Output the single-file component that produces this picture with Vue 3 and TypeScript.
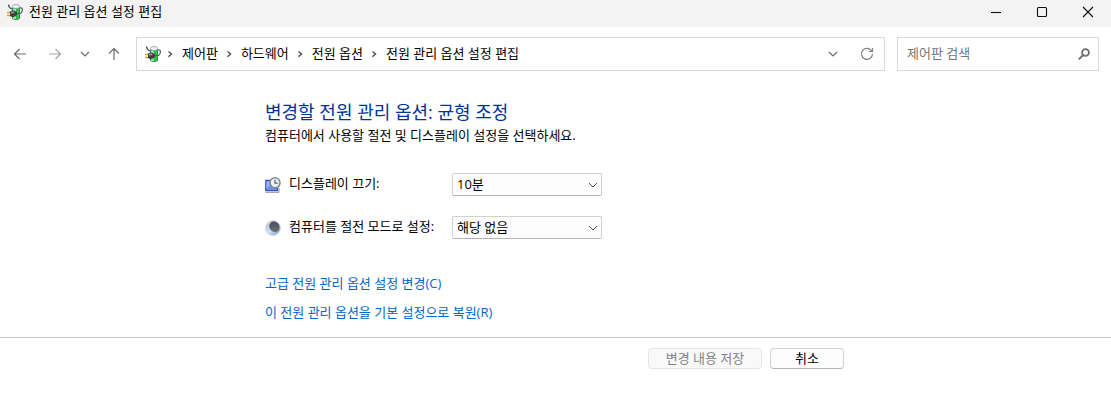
<script setup lang="ts">
import { ref } from 'vue'

const title = '전원 관리 옵션 설정 편집'
const crumbs: string[] = ['제어판', '하드웨어', '전원 옵션', title]
const query = ref('')
const displayOff = ref('10분')
const sleepAfter = ref('해당 없음')
const durations: string[] = ['10분', '30분', '1시간', '해당 없음']
</script>

<template>
  <svg class="defs" width="0" height="0" aria-hidden="true">
    <symbol id="power-plan" viewBox="0 0 16 16">
      <path d="M5 3h8v11.500q-1.500 1.500-4 1.500t-4-1.500z" fill="#1f9f3a" />
      <path d="M6 4.500h3V15H6z" fill="#8fe49a" />
      <path d="M9.500 5H12v10H9.500z" fill="#2fc04c" />
      <ellipse cx="9" cy="2.500" rx="3.700" ry="2" fill="#f4f6fc" stroke="#8d94b8" stroke-width=".8" />
      <path d="M13 4q2.600-.5 2.400 2T13.500 9.500H10" fill="none" stroke="#555c58" stroke-width="1.200" />
      <path d="M1.500 0.500q0 3 3.500 4.500" fill="none" stroke="#50545c" stroke-width="1.300" />
      <path d="M0 8.500h3.500M0 11.500h3.500" stroke="#d9a21c" stroke-width="1.600" />
      <path d="M3 7.500l2.500-1.200L8 7l2 1.500v2.200L8 12.500l-2.500.7L3 12z" fill="#404042" />
      <path d="M4 8l1.500-.7 2 .4L7 9.200l-3 .3z" fill="#949598" />
    </symbol>
  </svg>
  <div class="window">
    <header class="titlebar">
      <svg class="app-icon" viewBox="0 0 16 16" aria-hidden="true"><use href="#power-plan" /></svg>
      <span class="caption">{{ title }}</span>
      <button class="win-btn" type="button" aria-label="최소화">
        <svg viewBox="0 0 12 12"><path d="M1 6.500h10" /></svg>
      </button>
      <button class="win-btn" type="button" aria-label="최대화">
        <svg viewBox="0 0 12 12"><rect x="1.500" y="1.500" width="9" height="9" rx="1" /></svg>
      </button>
      <button class="win-btn" type="button" aria-label="닫기">
        <svg viewBox="0 0 12 12"><path d="M1 1l10 10M11 1L1 11" /></svg>
      </button>
    </header>

    <div class="toolbar">
      <nav class="history" aria-label="탐색">
        <button class="nav-btn" type="button" aria-label="뒤로">
          <svg width="14" height="14" viewBox="0 0 14 14"><path d="M13 7H1.500M6.500 2l-5 5 5 5" /></svg>
        </button>
        <button class="nav-btn forward" type="button" aria-label="앞으로">
          <svg width="14" height="14" viewBox="0 0 14 14"><path d="M1 7h11.500M7.500 2l5 5-5 5" /></svg>
        </button>
        <button class="nav-btn recent" type="button" aria-label="최근 위치">
          <svg width="10" height="14" viewBox="0 0 10 14"><path d="M1 5l4 4 4-4" /></svg>
        </button>
        <button class="nav-btn up" type="button" aria-label="위로">
          <svg width="14" height="14" viewBox="0 0 14 14"><path d="M7 13V1.500M2 6.500l5-5 5 5" /></svg>
        </button>
      </nav>
      <div class="address">
        <svg class="app-icon" viewBox="0 0 16 16" aria-hidden="true"><use href="#power-plan" /></svg>
        <ol class="crumbs">
          <li v-for="crumb in crumbs" :key="crumb">
            <svg width="6" height="8" viewBox="0 0 6 8"><path d="M1.500 1.500L4.500 4l-3 2.800" /></svg>
            <a href="#">{{ crumb }}</a>
          </li>
        </ol>
        <button class="addr-btn" type="button" aria-label="이전 위치">
          <svg width="10" height="14" viewBox="0 0 10 14"><path d="M1 5l4 4 4-4" /></svg>
        </button>
        <button class="addr-btn reload" type="button" aria-label="새로 고침">
          <svg width="14" height="14" viewBox="0 0 14 14"><path d="M12 4.500A5.500 5.500 0 1 0 12.500 7M12.500 1v3.500H9" /></svg>
        </button>
      </div>
      <label class="search">
        <input v-model="query" type="text" placeholder="제어판 검색" aria-label="제어판 검색" />
        <svg width="12" height="12" viewBox="0 0 12 12"><circle cx="7.500" cy="4.500" r="3.400" /><path d="M5.200 7L.8 11.400" /></svg>
      </label>
    </div>

    <main class="content">
      <h1>변경할 전원 관리 옵션: 균형 조정</h1>
      <p>컴퓨터에서 사용할 절전 및 디스플레이 설정을 선택하세요.</p>
      <div class="settings">
        <div class="setting">
          <svg class="row-icon" viewBox="0 0 16 16" aria-hidden="true">
            <path d="M.8 3.500h11.700v10.200H.8z" fill="#6f90f2" stroke="#3a50c4" stroke-width="1.300" />
            <path d="M1.500 4.200h4l-2 6-2 1z" fill="#9db8fc" />
            <path d="M.5 15.300h13.500V11" fill="none" stroke="#8f9290" />
            <circle cx="10" cy="5.800" r="5" fill="#edf4f6" stroke="#868b8e" stroke-width="1.600" />
            <path d="M10 2.800v3.400h2.800" fill="none" stroke="#4c697a" stroke-width="1.200" />
          </svg>
          <label for="display-off">디스플레이 끄기:</label>
          <span class="drop">
            <select id="display-off" v-model="displayOff">
              <option v-for="d in durations" :key="d">{{ d }}</option>
            </select>
            <svg width="10" height="8" viewBox="0 0 10 8"><path d="M1 2l4 4 4-4" /></svg>
          </span>
        </div>
        <div class="setting">
          <svg class="row-icon" viewBox="0 0 16 16" aria-hidden="true">
            <defs>
              <linearGradient id="moon" x1="0" y1="0" x2="1" y2="1">
                <stop offset="0" stop-color="#b4bec8" />
                <stop offset=".5" stop-color="#cfe3f8" />
                <stop offset="1" stop-color="#6f92c8" />
              </linearGradient>
              <linearGradient id="shade" x1="0" y1="0" x2="1" y2="1">
                <stop offset="0" stop-color="#3f4658" />
                <stop offset="1" stop-color="#77777b" />
              </linearGradient>
            </defs>
            <circle cx="8" cy="8" r="7.400" fill="url(#moon)" stroke="#ccd5dd" />
            <ellipse cx="9.400" cy="6.800" rx="5.500" ry="4.900" fill="url(#shade)" transform="rotate(45 9.400 6.800)" />
          </svg>
          <label for="sleep-after">컴퓨터를 절전 모드로 설정:</label>
          <span class="drop">
            <select id="sleep-after" v-model="sleepAfter">
              <option v-for="d in durations" :key="d">{{ d }}</option>
            </select>
            <svg width="10" height="8" viewBox="0 0 10 8"><path d="M1 2l4 4 4-4" /></svg>
          </span>
        </div>
      </div>
      <div class="links">
        <a href="#">고급 전원 관리 옵션 설정 변경(C)</a>
        <a href="#">이 전원 관리 옵션을 기본 설정으로 복원(R)</a>
      </div>
    </main>

    <footer class="footer">
      <div class="actions">
        <button class="save" type="button" disabled>변경 내용 저장</button>
        <button class="cancel" type="button">취소</button>
      </div>
    </footer>
  </div>
</template>

<style>
body {
  margin: 0;
  background: #fff;
}
</style>

<style scoped>
.defs {
  position: absolute;
}
.window,
.window button,
.window input,
.window select {
  font-family: "Open Sans", "Noto Sans CJK KR", sans-serif;
  font-size: 13px;
  line-height: 20px;
  color: #000;
}
.window * {
  box-sizing: border-box;
}
svg {
  display: block;
  flex: none;
}
button {
  padding: 0;
}
.app-icon {
  width: 16px;
  height: 16px;
}
.titlebar {
  display: flex;
  align-items: center;
  height: 27px;
  padding: 0 0 4px 7px;
  background: #f3f3f3;
}
.caption {
  flex: 1;
  margin-left: 6px;
  padding-bottom: 2px;
}
.win-btn {
  display: flex;
  align-items: center;
  justify-content: center;
  width: 46px;
  height: 23px;
  border: 0;
  background: none;
}
.win-btn svg {
  width: 12px;
  height: 12px;
  fill: none;
  stroke: #111;
  stroke-width: 1.100;
}
.toolbar {
  display: flex;
  gap: 12px;
  padding: 10px 12px 0 13px;
}
.history {
  display: flex;
  align-items: center;
  width: 111px;
}
.nav-btn,
.addr-btn {
  display: flex;
  border: 0;
  background: none;
}
.nav-btn svg,
.addr-btn svg {
  fill: none;
  stroke: #6b6b6b;
  stroke-width: 1.200;
}
.nav-btn.forward {
  margin-left: 21px;
}
.nav-btn.forward svg {
  stroke: #a3a3a3;
}
.recent {
  margin-left: 18px;
}
.up {
  margin-left: 17px;
}
.address,
.search {
  display: flex;
  align-items: center;
  height: 34px;
  border: 1px solid #d9d9d9;
  background: #fff;
}
.address {
  flex: 1;
  padding: 0 10px 0 8px;
}
.crumbs {
  display: flex;
  flex: 1;
  margin: 0 0 0 6px;
  padding: 0;
  list-style: none;
}
.crumbs li {
  display: flex;
  align-items: center;
  gap: 9px;
  margin-right: 8px;
}
.crumbs svg {
  fill: none;
  stroke: #555;
  stroke-width: 1.500;
}
.crumbs a {
  padding-bottom: 2px;
  color: #000;
  text-decoration: none;
}
.addr-btn.reload {
  margin-left: 22px;
}
.addr-btn.reload svg {
  stroke: #808080;
}
.search {
  width: 202px;
  padding: 0 8px 0 9px;
}
.search input {
  flex: 1;
  min-width: 0;
  padding: 0 0 2px;
  border: 0;
  outline: 0;
  background: none;
}
.search input::placeholder {
  color: #757575;
  opacity: 1;
}
.search svg {
  fill: none;
  stroke: #6b6b6b;
  stroke-width: 1.800;
}
.content,
.actions {
  max-width: 581px;
  margin: 0 auto;
}
h1 {
  margin: 0;
  padding-top: 28px;
  font-size: 18px;
  font-weight: 400;
  line-height: 26px;
  color: #003399;
}
p {
  margin: 0;
}
.settings {
  display: flex;
  flex-direction: column;
  gap: 20px;
  margin-top: 28px;
}
.setting {
  display: flex;
  align-items: center;
}
.row-icon {
  width: 16px;
  height: 16px;
}
.setting label {
  width: 163px;
  margin-left: 8px;
  padding-bottom: 3px;
}
.drop {
  display: grid;
  align-items: center;
  width: 150px;
}
.drop select,
.drop svg {
  grid-area: 1 / 1;
}
.drop select {
  width: 100%;
  height: 23px;
  padding: 0 20px 2px 4px;
  border: 1px solid #d0d0d0;
  border-bottom-color: #b5b5b5;
  border-radius: 2px;
  appearance: none;
  background: #fdfdfd;
}
.drop svg {
  justify-self: end;
  margin-right: 4px;
  fill: none;
  stroke: #555;
  pointer-events: none;
}
.links {
  display: flex;
  flex-direction: column;
  align-items: flex-start;
  gap: 9px;
  margin-top: 34px;
}
.links a {
  color: #0066cc;
  text-decoration: none;
}
.footer {
  margin-top: 15px;
  border-top: 1px solid #cacaca;
}
.actions {
  display: flex;
  justify-content: flex-end;
  gap: 8px;
  padding: 10px 2px 0 0;
}
.actions button {
  height: 21px;
  border: 1px solid #d0d0d0;
  border-bottom-color: #b5b5b5;
  border-radius: 4px;
  background: #fdfdfd;
  line-height: 19px;
}
.actions .save {
  width: 114px;
  border-color: #e5e5e5;
  background: #f9f9f9;
  color: #838383;
}
.actions .cancel {
  width: 74px;
}
</style>
